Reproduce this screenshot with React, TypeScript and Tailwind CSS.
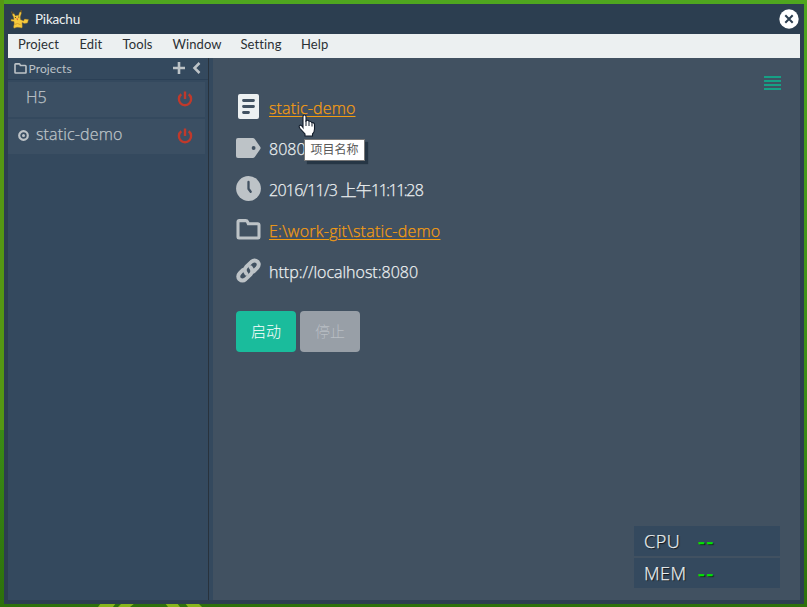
import React from "react";

const MENU = [
  { label: "Project", cls: "w-[61.5px]" },
  { label: "Edit", cls: "w-[43px]" },
  { label: "Tools", cls: "w-[50px]" },
  { label: "Window", cls: "w-[68px]" },
  { label: "Setting", cls: "w-[60.5px]" },
  { label: "Help", cls: "w-[50px]" },
];

const segoe = "font-['Open_Sans','Noto_Sans_CJK_SC',sans-serif] [-webkit-text-stroke:0.25px_currentColor]";

function Pikachu() {
  return (
    <svg width="20" height="20" viewBox="0 0 20 20" className="block shrink-0">
      <path d="M1.500 2.500L4 4.500 5.500 7Q7 6 8.500 6.500L9.500 3.500 11.500 1 11.300 4.500 10.200 8 10.500 10.500 13.500 12 14.500 10 18.500 10.500 17.500 14 14.500 14.500 12 13.500 12.300 17.500 12 19 9.500 18.500 7 18.300 4 19.300 3.500 18 4.200 15 4 12.500 1 12 1.200 10.300 4 10.500 3.500 8 2.500 6Z" fill="#f5c93c" stroke="#94702a" strokeWidth=".4" />
      <path d="M1.300 2.200l2.400 2-.8 1.200zM11.600.8l-.2 2.700-1.300-.5z" fill="#30291d" />
      <circle cx="5.500" cy="8.500" r=".6" fill="#463820" />
      <circle cx="8.700" cy="8" r=".6" fill="#463820" />
      <path d="M6.200 9.600l2-.2-.7 2.200z" fill="#d9503c" />
      <path d="M4.500 15.500l3-1 3 1.200" stroke="#cd932b" fill="none" strokeWidth=".8" />
    </svg>
  );
}

function FolderIcon({ w, h }: { w: number; h: number }) {
  return (
    <svg width={w} height={h} viewBox="0 0 26 22" className="block shrink-0">
      <path d="M2 19V3q0-1.300 1.300-1.300H10Q11.500 1.700 12 3l.8 2H22.500Q24 5 24 6.500V19q0 1-1 1H3q-1 0-1-1z" fill="none" stroke="#bdc3c7" strokeWidth="3.200" />
    </svg>
  );
}

function Power() {
  return (
    <svg width="16" height="16" viewBox="0 0 16 16" className="block">
      <path d="M4.300 3.300A6.100 6.100 0 1 0 11.700 3.300M8 .5V8" fill="none" stroke="#c0392b" strokeWidth="2.400" />
    </svg>
  );
}

function DocIcon() {
  return (
    <svg width="21" height="25" viewBox="0 0 21 25">
      <rect width="21" height="25" rx="2" fill="#ecf0f1" />
      <path d="M5.500 6.500h10M5.500 12.500h10M5.500 18.500h5" stroke="#415161" strokeWidth="2.800" strokeLinecap="round" />
    </svg>
  );
}

function TagIcon() {
  return (
    <svg width="25" height="20" viewBox="0 0 26 20" preserveAspectRatio="none">
      <path fillRule="evenodd" d="M2 0h15.500q1.200 0 2 1L25.300 9q.6 1 0 2L19.500 19q-.8 1-2 1H2q-2 0-2-2V2Q0 0 2 0zM18.300 8a2 2 0 1 0 0 4 2 2 0 0 0 0-4z" fill="#bdc3c7" />
    </svg>
  );
}

function ClockIcon() {
  return (
    <svg width="25" height="25" viewBox="0 0 25 25">
      <circle cx="12.500" cy="12.500" r="12.400" fill="#bdc3c7" />
      <path d="M12.500 6v6.800l2.200 3" fill="none" stroke="#415161" strokeWidth="2.300" strokeLinecap="round" />
    </svg>
  );
}

function LinkIcon() {
  return (
    <svg width="25" height="25" viewBox="0 0 26 26">
      <g fill="none" stroke="#bdc3c7" strokeWidth="4" strokeLinecap="round" strokeLinejoin="round">
        <path d="M10.800 16.300Q7.500 12.500 10.500 9.300L16 3.900Q19.300 1.100 22.500 3.900 25 7.100 22.100 10.300L18.500 13.900" />
        <path d="M15.200 9.700Q18.500 13.500 15.500 16.700L10 22.100Q6.700 24.900 3.500 22.100 1 18.900 3.900 15.700L7 12.500" />
      </g>
    </svg>
  );
}

function Row({ icon, children }: { icon: React.ReactNode; children: React.ReactNode }) {
  return (
    <div className="flex h-[41px] items-center">
      <div className="flex w-[25px] shrink-0 justify-center">{icon}</div>
      <div className="ml-[8px] whitespace-nowrap pt-[3px] text-[16px] leading-[24px]">{children}</div>
    </div>
  );
}

export default function App() {
  return (
    <div className="relative h-[607px] w-[807px] overflow-hidden bg-linear-to-b from-[#4fa61f] via-[#398814] via-75% to-[#2d700b] p-1 font-[Lato,sans-serif]">
      <div className="absolute top-0 left-0 h-[430px] w-1 bg-[#559713]" />
      <svg className="absolute top-[603px] left-[98px]" width="106" height="4" viewBox="0 0 106 4">
        <path d="M3 0h15l-3 4H0zM24 0h13l-5 4H20zM67 0h12l3 4H70zM87 0h13l4 4H90z" fill="#87b51b" />
      </svg>

      <div className="relative flex h-[600px] w-[800px] flex-col bg-[#2c3e50] pr-1 pb-1 pl-1">
        <header className="flex h-[30px] shrink-0 items-center pl-[2px] text-[#ecf0f1]">
          <Pikachu />
          <span className="ml-[5px] text-[13.500px] leading-5 tracking-[-0.2px]">Pikachu</span>
          <svg className="mr-px ml-auto" width="20" height="20" viewBox="0 0 20 20">
            <circle cx="10" cy="10" r="9.700" fill="#fff" />
            <path d="M6.300 6.300l7.400 7.400M13.700 6.300l-7.400 7.400" stroke="#2c3e50" strokeWidth="2" />
          </svg>
        </header>

        <nav className="flex h-6 shrink-0 bg-[#ecf0f1] text-[13px] leading-[21px] tracking-[0.1px] text-[#2b3035]">
          {MENU.map((m) => (
            <span key={m.label} className={`${m.cls} shrink-0 pl-[10px]`}>{m.label}</span>
          ))}
        </nav>

        <div className="flex min-h-0 flex-1">
          <aside className="w-[201px] shrink-0 border-r border-[#28323c] bg-[#34495e] text-[#bdc3c7]">
            <div className="flex h-[22px] items-center border-b border-[#2b4056] pl-[6px]">
              <FolderIcon w={13} h={11} />
              <span className="ml-[1.500px] text-[12px] leading-5 tracking-[0.1px]">Projects</span>
              <svg className="mb-[2px] ml-auto" width="12" height="12" viewBox="0 0 12 12">
                <path d="M6 0v12M0 6h12" stroke="#bdc3c7" strokeWidth="2.600" />
              </svg>
              <svg className="mr-[7px] mb-[2px] ml-[7px]" width="9" height="12" viewBox="0 0 9 12">
                <path d="M7.500 1L2.500 6l5 5" fill="none" stroke="#bdc3c7" strokeWidth="2.500" />
              </svg>
            </div>
            <div className="mt-[2px] mr-[3px] flex h-[35px] items-center bg-[#3b4f63] pl-[18px]">
              <span className={`${segoe} mb-[5px] text-[16px] leading-6 font-light`}>H5</span>
              <div className="mr-[12px] mb-px ml-auto"><Power /></div>
            </div>
            <div className="mt-[2px] mr-[3px] flex h-[35px] items-center bg-[#3b4f63] pl-[10px]">
              <svg className="mb-[2px]" width="11" height="11" viewBox="0 0 11 11">
                <circle cx="5.500" cy="5.500" r="4.300" fill="none" stroke="#bdc3c7" strokeWidth="2.200" />
                <circle cx="5.500" cy="5.500" r="1.500" fill="#bdc3c7" />
              </svg>
              <span className={`${segoe} mb-[5px] ml-[7px] text-[16px] leading-6 font-light tracking-[0.15px]`}>static-demo</span>
              <div className="mr-[12px] mb-px ml-auto"><Power /></div>
            </div>
          </aside>
          <div className="w-1 shrink-0 bg-[#34495e]" />
          <main className={`${segoe} relative min-w-0 flex-1 bg-[#415161] pt-[28px] pl-[23px] font-light text-[#ecf0f1]`}>
            <Row icon={<DocIcon />}><span className="tracking-[0.15px] text-[#f39c12] underline decoration-1 underline-offset-2">static-demo</span></Row>
            <Row icon={<TagIcon />}>8080</Row>
            <Row icon={<ClockIcon />}><span className="tracking-[-0.75px]">2016/11/3 上午</span><span className="tracking-[-1.500px]">11:11:</span><span className="tracking-[-0.600px]">28</span></Row>
            <Row icon={<FolderIcon w={25} h={21} />}><span className="tracking-[0.25px] text-[#f39c12] underline decoration-1 underline-offset-2">E:\work-git\static-demo</span></Row>
            <Row icon={<LinkIcon />}>http://localhost:8080</Row>
            <div className="mt-5 flex gap-1 text-[15px] leading-[41px] [-webkit-text-stroke:0px]">
              <button className="h-[41px] w-[60px] rounded-[4px] bg-[#1abc9c] text-white">启动</button>
              <button className="h-[41px] w-[60px] rounded-[4px] bg-[#989fa7] text-[#b9bec4]">停止</button>
            </div>

            <svg className="absolute top-[18px] right-[19px]" width="17" height="14" viewBox="0 0 17 14">
              <path d="M0 1h17M0 5h17M0 9h17M0 13h17" stroke="#16a085" strokeWidth="2" />
            </svg>

            <div className="absolute right-5 bottom-3 flex w-[146px] flex-col gap-[2px] text-[18px] leading-[30px] tracking-[0.5px] [text-shadow:1px_1px_1px_#111]">
              <div className="flex h-[30px] bg-[#34495e] pl-[10px]"><span className="w-[54px]">CPU</span><span className="origin-left scale-x-[1.15] font-semibold tracking-[1.500px] text-[#00e600]">--</span></div>
              <div className="flex h-[30px] bg-[#34495e] pl-[10px]"><span className="w-[54px]">MEM</span><span className="origin-left scale-x-[1.15] font-semibold tracking-[1.500px] text-[#00e600]">--</span></div>
            </div>

            <div className="absolute top-[81px] left-[91px] h-[22px] w-[61px] border border-[#777] bg-white text-center text-[12px] leading-[20px] font-normal text-[#575757] shadow-[3px_3px_1px_#263645] [-webkit-text-stroke:0px]">项目名称</div>
            <svg className="absolute top-[56px] left-[85px]" width="18" height="24" viewBox="0 0 18 24">
              <path d="M5 13.500V2.500Q5 1 6.500 1T8 2.500V7Q10 5.500 11 7.300 12.800 6.800 13.700 8.500 16.500 8.300 16.500 11v4q0 3-2 5v2H7v-2L2 14.500Q.3 12 2 11.200q1.500-.4 3 2.300z" fill="#fff" stroke="#111b29" strokeWidth="1.100" />
              <path d="M8 6.500v5.500M11 7.500v4.500M14 9v3.500" stroke="#111b29" strokeWidth="1" />
            </svg>
          </main>
        </div>
      </div>
    </div>
  );
}
